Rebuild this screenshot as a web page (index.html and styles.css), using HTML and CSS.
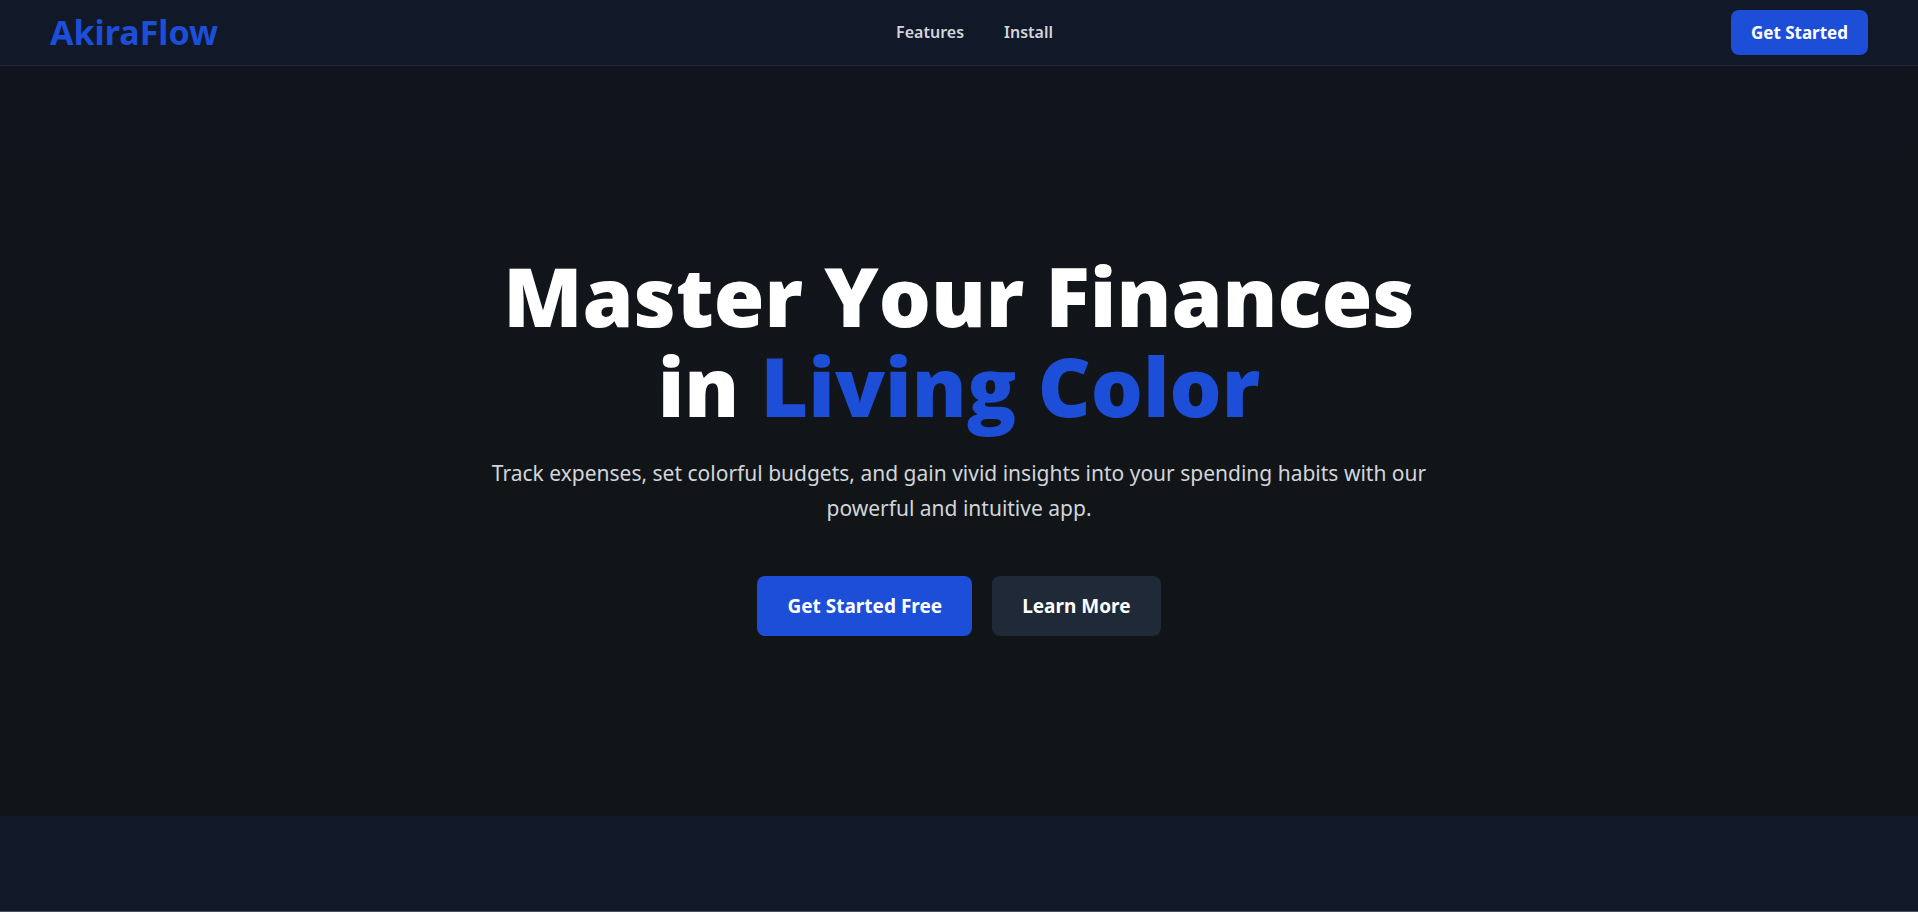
FILE: index.html
```html
<!DOCTYPE html>
<html lang="en">
<head>
<meta charset="utf-8">
<meta name="viewport" content="width=device-width, initial-scale=1">
<title>AkiraFlow</title>
<link rel="stylesheet" href="styles.css">
</head>
<body>
<header class="site-header">
  <a class="logo" href="#">AkiraFlow</a>
  <nav class="nav">
    <a href="#features">Features</a>
    <a href="#install">Install</a>
  </nav>
  <button class="btn btn-primary btn-small" type="button">Get Started</button>
</header>
<main class="main">
  <section class="hero">
    <h1 class="hero-title">Master Your Finances<br>in <span class="accent">Living Color</span></h1>
    <p class="hero-text">Track expenses, set colorful budgets, and gain vivid insights into your spending habits with our powerful and intuitive app.</p>
    <div class="actions">
      <button class="btn btn-primary" type="button">Get Started Free</button>
      <button class="btn btn-secondary" type="button">Learn More</button>
    </div>
  </section>
  <section class="features" id="features"></section>
</main>
</body>
</html>
```
FILE: styles.css
```css
* {
  box-sizing: border-box;
}

body {
  margin: 0;
  min-height: 100vh;
  display: flex;
  flex-direction: column;
  background: #111827;
  color: #fff;
  font-family: "Segoe UI", "Noto Sans", "Open Sans", sans-serif;
}

.site-header {
  display: flex;
  align-items: center;
  justify-content: space-between;
  padding: 10px 50px;
  background: #111827;
  border-bottom: 1px solid #1f2937;
}

.logo {
  color: #1d4ed8;
  font-size: 34px;
  font-weight: 700;
  line-height: 45px;
  text-decoration: none;
}

.nav {
  display: flex;
  gap: 40px;
}

.nav a {
  color: #d1d5db;
  font-size: 16px;
  font-weight: 600;
  line-height: 25px;
  text-decoration: none;
}

.main {
  flex: 1;
  display: flex;
  flex-direction: column;
}

.hero {
  display: flex;
  flex-direction: column;
  align-items: center;
  padding: 184px 20px 180px;
  text-align: center;
  background: linear-gradient(#11141d, #121517 60%);
}

.hero-title {
  margin: 0 0 26px;
  font-family: "Segoe UI", "Open Sans", "Noto Sans", sans-serif;
  font-size: 82px;
  font-weight: 800;
  line-height: 90px;
}

.accent {
  color: #1d4ed8;
}

.hero-text {
  max-width: 960px;
  margin: 0 0 50px;
  color: #d1d5db;
  font-size: 21px;
  line-height: 35px;
}

.actions {
  display: flex;
  gap: 20px;
}

.btn {
  padding: 15px 30px;
  border: 0;
  border-radius: 8px;
  color: #fff;
  font-family: inherit;
  font-size: 19px;
  font-weight: 700;
  line-height: 30px;
}

.btn-primary {
  background: #1d4ed8;
}

.btn-secondary {
  background: #1f2937;
}

.btn-small {
  padding: 10px 20px;
  font-size: 17px;
  line-height: 25px;
}

.features {
  flex: 1;
  border-bottom: 1px solid #4b5058;
}
```
